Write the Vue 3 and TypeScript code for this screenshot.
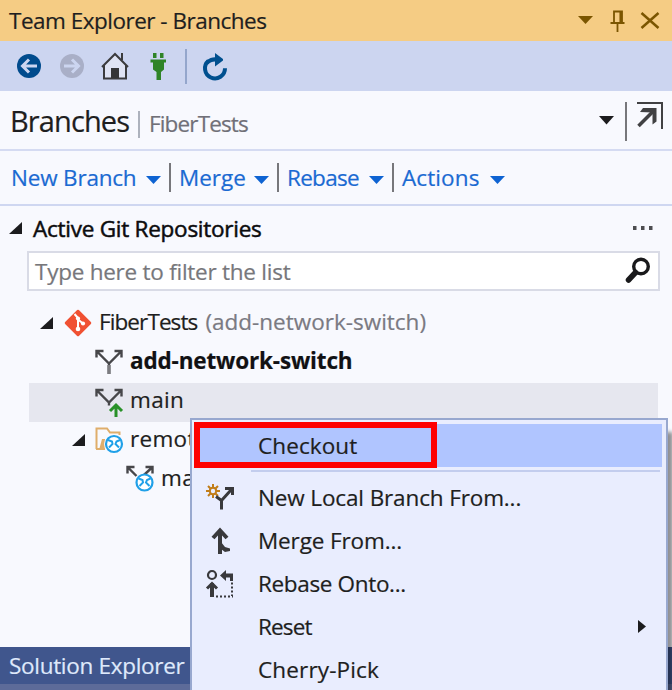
<script setup lang="ts">
interface Action { label: string; cls: string }
interface MenuItem { label: string; cls: string; icon?: string; submenu?: boolean }

const actions: Action[] = [
  { label: 'New Branch', cls: 'new' },
  { label: 'Merge', cls: 'merge' },
  { label: 'Rebase', cls: 'rebase' },
  { label: 'Actions', cls: 'actions' },
]

const menu: MenuItem[] = [
  { label: 'New Local Branch From...', cls: 'm-new', icon: 'new' },
  { label: 'Merge From...', cls: 'm-new', icon: 'merge' },
  { label: 'Rebase Onto...', cls: 'm-rebase', icon: 'rebase' },
  { label: 'Reset', cls: 'm-reset', submenu: true },
  { label: 'Cherry-Pick', cls: 'm-cherry' },
]
</script>

<template>
  <div class="window">
    <header class="titlebar">
      <span class="title">Team Explorer - Branches</span>
      <svg class="window-icons" width="84" height="24" viewBox="0 0 84 24">
        <path d="M1 7h15l-7.500 8z" fill="#7b5500" />
        <g fill="none" stroke="#7b5500" stroke-width="1.800">
          <path d="M37 14V2.500h8V14M33.500 14h14M40.500 14v9" />
          <path d="M43.700 3v11" stroke-width="2.500" />
          <path d="M64.500 4l17 15M81.500 4l-17 15" stroke-width="2.500" />
        </g>
      </svg>
    </header>

    <nav class="toolbar">
      <svg width="28" height="28" viewBox="0 0 28 28">
        <circle cx="14" cy="14" r="12" fill="#004b8d" />
        <path d="M22 14H8M14 7.500L7.500 14l6.500 6.500" fill="none" stroke="#ccd5f0" stroke-width="3" />
      </svg>
      <svg width="28" height="28" viewBox="0 0 28 28">
        <circle cx="14" cy="14" r="12" fill="#a9afc7" />
        <path d="M6 14h14M14 7.500l6.500 6.500-6.500 6.500" fill="none" stroke="#ccd5f0" stroke-width="3" />
      </svg>
      <svg width="28" height="28" viewBox="0 0 28 28">
        <path d="M3 14L14 3l11 11v12.500H3z" fill="#dfe3f3" />
        <path d="M1 15L14 2l13 13M3 13v13.500h22V13M21 8V1" fill="none" stroke="#3b3b3d" stroke-width="2" />
        <path d="M10 16h8v10h-8z" fill="#353537" />
      </svg>
      <svg width="28" height="28" viewBox="0 0 28 28">
        <path d="M9 1h3.500v5H9zM16 1h3.500v5H16zM6.500 7.500h15.500v3H20v7l-3 2.500v8h-4.500v-8l-3.500-2.500v-7H6.500z" fill="#2f8427" />
      </svg>
      <i class="rule"></i>
      <svg class="refresh" width="28" height="28" viewBox="0 0 28 28">
        <path d="M7.500 7.800a10 10 0 1 0 16.500 7.500" fill="none" stroke="#00508f" stroke-width="4" />
        <path d="M5 8c3-3 6-3.800 9-3.800V0l8 6v1.500l-8 6V8.500c-3 0-5 1-7 3z" fill="#00508f" />
      </svg>
    </nav>

    <section class="heading">
      <h1>Branches</h1>
      <i class="heading-rule"></i>
      <span class="project">FiberTests</span>
      <div class="heading-tools">
        <svg width="15" height="9" viewBox="0 0 15 9"><path d="M0 0h15L7.500 8.500z" fill="#1c1c1e" /></svg>
        <i class="tool-rule"></i>
        <svg class="popout" width="28" height="28" viewBox="0 0 28 28">
          <path d="M1 2h25v26" fill="none" stroke="#414143" stroke-width="2" />
          <path d="M2.500 25L17.500 10" fill="none" stroke="#414143" stroke-width="3.500" />
          <path d="M7 7h13.500v13.500l-4 3V11.500L4 11z" fill="#414143" />
        </svg>
      </div>
    </section>

    <nav class="actions-row">
      <a v-for="a in actions" :key="a.label" :class="['action', 'a-' + a.cls]">
        <span>{{ a.label }}</span>
        <svg width="15" height="8" viewBox="0 0 15 8"><path d="M0 0h15L7.500 8z" fill="#0e63d2" /></svg>
      </a>
    </nav>

    <section class="repos">
      <div class="section-title">
        <svg width="13" height="12" viewBox="0 0 13 12"><path d="M13 0v12H0z" fill="#1c1c1e" /></svg>
        <h2>Active Git Repositories</h2>
        <svg class="dots" width="22" height="4" viewBox="0 0 22 4"><path d="M1 0h3.500v4H1zM9 0h3.500v4H9zM17 0h3.500v4H17z" fill="#4d4d50" /></svg>
      </div>
      <div class="filter">
        <span>Type here to filter the list</span>
        <svg width="28" height="28" viewBox="0 0 28 28">
          <circle cx="17" cy="9.500" r="7.300" fill="none" stroke="#19191b" stroke-width="3.400" />
          <path d="M11.500 15.500L4.500 23" stroke="#19191b" stroke-width="5.500" stroke-linecap="round" />
        </svg>
      </div>

      <div class="tree">
        <div class="node depth-0">
          <svg width="13" height="12" viewBox="0 0 13 12"><path d="M13 0v12H0z" fill="#1c1c1e" /></svg>
          <svg class="git" width="28" height="28" viewBox="0 0 28 28">
            <path d="M14 2l12 12-12 12L2 14z" fill="#f05133" stroke="#f05133" stroke-width="2.500" stroke-linejoin="round" />
            <path d="M10.500 5l3.500 4v11M14 10.500l5 4" fill="none" stroke="#fff" stroke-width="2" />
            <circle cx="14" cy="9.500" r="2.100" fill="#fff" /><circle cx="19" cy="14.500" r="2.100" fill="#fff" /><circle cx="14" cy="20" r="2.300" fill="#fff" />
          </svg>
          <span class="repo">FiberTests</span><span class="current">(add-network-switch)</span>
        </div>
        <div class="node depth-1">
          <svg width="28" height="28" viewBox="0 0 28 28">
            <path d="M1.500 10.500V4h7M19.500 4h7v6.500M2 4.500l12 12 12-12M14 16v11" fill="none" stroke="#47474a" stroke-width="2.400" />
            <path d="M14 18v9" stroke="#7c7c80" stroke-width="3.500" />
          </svg>
          <b>add-network-switch</b>
        </div>
        <div class="node depth-1 selected">
          <svg width="28" height="28" viewBox="0 0 28 28">
            <path d="M1.500 10.500V4h7M19.500 4h7v6.500M2 4.500l12 12 12-12M14 15.500v4" fill="none" stroke="#47474a" stroke-width="2.400" />
            <path d="M21 31V20M15 25l6-6 6 6" fill="none" stroke="#289128" stroke-width="3" />
          </svg>
          <span class="main">main</span>
        </div>
        <div class="node depth-folder">
          <svg width="13" height="12" viewBox="0 0 13 12"><path d="M13 0v12H0z" fill="#1c1c1e" /></svg>
          <svg class="folder" width="28" height="28" viewBox="0 0 28 28">
            <path d="M1.500 23V2.500H12l3 4h9.500V9M1 23h5" fill="none" stroke="#dfae6b" stroke-width="2" />
            <path d="M4 24l3-11h3v11z" fill="#dfae6b" />
            <circle cx="19" cy="18" r="10" fill="#f7f9fe" />
            <circle cx="19" cy="18" r="8" fill="#fff" stroke="#20a0e8" stroke-width="2.200" />
            <path d="M13 14l4 1.500.5 2.500-3.500 3.500M25 14l-3.500 1.500-1 2.500 3.500 3.500" fill="none" stroke="#20a0e8" stroke-width="2" />
          </svg>
          <span class="main">remot</span>
        </div>
        <div class="node depth-2">
          <svg width="28" height="28" viewBox="0 0 28 28">
            <path d="M1.500 9.500V3h7M19.500 3h7v6.500M2 3.500l8.500 8.500M26 3.500L18 11" fill="none" stroke="#47474a" stroke-width="2.400" />
            <circle cx="18.500" cy="18.500" r="8" fill="#fff" stroke="#20a0e8" stroke-width="2.200" />
            <path d="M12.500 14.500l4 1.500.5 2.500-3.500 3.500M24.500 14.500L21 16l-1 2.500 3.500 3.500" fill="none" stroke="#20a0e8" stroke-width="2" />
          </svg>
          <span class="main">ma</span>
        </div>
      </div>
    </section>

    <footer class="bottom-tab"><span>Solution Explorer</span></footer>

    <div class="context-menu">
      <div class="item active"><span class="label m-checkout">Checkout</span></div>
      <hr />
      <div v-for="m in menu" :key="m.label" class="item">
        <span class="glyph">
          <svg v-if="m.icon === 'new'" width="28" height="28" viewBox="0 0 28 28">
            <path d="M7 0v14M0 7h14M2 2l10 10M12 2L2 12" stroke="#c17d19" stroke-width="2" />
            <circle cx="7" cy="7" r="3.200" fill="#e9edfe" stroke="#c17d19" stroke-width="2" />
            <path d="M10 12.500l5.500 4L25 6M15.500 16v9.500M19 4.500h7.500V11" fill="none" stroke="#39393c" stroke-width="3" />
          </svg>
          <svg v-else-if="m.icon === 'merge'" width="28" height="28" viewBox="0 0 28 28">
            <path d="M14 27V3M7 11l7-7.500 7 7.500" fill="none" stroke="#39393c" stroke-width="4" />
            <path d="M15 15l4 5 5 1.500v2.500l-5 1-4-3z" fill="#39393c" />
          </svg>
          <svg v-else-if="m.icon === 'rebase'" width="28" height="28" viewBox="0 0 28 28">
            <circle cx="6" cy="5" r="4" fill="none" stroke="#39393c" stroke-width="2.200" />
            <path d="M6 13v14" stroke="#39393c" stroke-width="4" />
            <path d="M1 18.500l5-5 5 5" fill="none" stroke="#39393c" stroke-width="3" />
            <path d="M14 5.500L20 0v3.500h7V11h-3V7.500h-4V11z" fill="#39393c" />
            <path d="M26 12.500v13.500M10 26.500h17" stroke="#39393c" stroke-width="2" stroke-dasharray="2 2" />
          </svg>
        </span>
        <span :class="['label', m.cls]">{{ m.label }}</span>
        <svg v-if="m.submenu" class="sub" width="8" height="13" viewBox="0 0 8 13"><path d="M0 0l8 6.500L0 13z" fill="#1c1c1e" /></svg>
      </div>
      <div class="callout"></div>
    </div>
  </div>
</template>

<style>
body { overflow: hidden; }
</style>

<style scoped>
* { box-sizing: border-box; }
svg { display: block; flex: none; overflow: visible; }
i { flex: none; }
.window {
  position: relative;
  width: 672px;
  height: 690px;
  overflow: hidden;
  display: flex;
  flex-direction: column;
  background: #f8f9fe;
  font-family: "Open Sans", "Noto Sans", sans-serif;
  font-size: 22.5px;
  color: #1e1e20;
  white-space: nowrap;
  -webkit-text-stroke: 0.2px;
}
.titlebar {
  flex: none;
  height: 41px;
  display: flex;
  align-items: center;
  justify-content: space-between;
  padding: 0 11px 0 9px;
  background: #f5cc84;
}
.title { letter-spacing: -0.5px; }
.toolbar {
  flex: none;
  height: 50px;
  display: flex;
  align-items: center;
  gap: 15px;
  padding-left: 15px;
  background: #ccd5f0;
}
.rule { width: 2px; height: 35px; margin: 0 0 0 -2px; background: #94a6cc; }
.refresh { margin: 2px 0 0 -1px; }
.heading {
  flex: none;
  height: 60px;
  display: flex;
  align-items: center;
  padding: 0 8px 0 10px;
  border-bottom: 2px solid #d5dbf2;
}
h1 { margin: 2px 0 0; font-size: 29px; font-weight: 400; letter-spacing: -0.9px; width: 128px; line-height: 60px; }
.heading-rule { width: 2px; height: 27px; margin-top: 8px; background: #adb2bd; }
.project { margin: 7px 0 0 9px; color: #707078; letter-spacing: -0.85px; }
.heading-tools { margin-left: auto; display: flex; align-items: center; gap: 11px; }
.tool-rule { width: 2px; height: 39px; margin: 2px -2px 0 0; background: #77777b; }
.popout { margin-top: -10px; }
.actions-row {
  flex: none;
  height: 55px;
  display: flex;
  align-items: center;
  border-bottom: 2px solid #cfd7f1;
  color: #1b6ad2;
}
.action { height: 29px; display: flex; align-items: center; justify-content: space-between; padding: 0 8px 0 8px; border-right: 2px solid #77777b; }
.action svg { margin-top: 5px; }
.a-new { width: 171px; padding-left: 11px; letter-spacing: -0.2px; }
.a-merge { width: 108px; }
.a-rebase { width: 115px; letter-spacing: -0.7px; }
.a-actions { width: 111px; padding: 0 0 0 8px; border: 0; letter-spacing: 0.1px; }
.repos { flex: none; height: 441px; }
.section-title { height: 45px; display: flex; align-items: center; padding: 0 18px 0 9px; }
.section-title svg { margin-top: -2px; }
h2 { margin: 0 0 0 11px; font-size: 22.5px; font-weight: 500; letter-spacing: -0.25px; color: #0c0c0e; -webkit-text-stroke: 0.5px; }
.section-title .dots { margin: -1px 0 0 auto; }
.filter {
  height: 40px;
  margin: 0 12px 0 27px;
  padding: 0 6px 0 6px;
  display: flex;
  align-items: center;
  justify-content: space-between;
  border: 2px solid #d9dbe6;
  background: #fff;
  color: #77777b;
  letter-spacing: -0.25px;
}
.tree { margin: 14px 14px 0 29px; }
.node { height: 39px; display: flex; align-items: center; padding-bottom: 6px; }
.node > svg { margin-top: 3px; }
.depth-0 { padding-left: 11px; }
.node > .git { margin: 3px 7px 0 11px; }
.repo { letter-spacing: -0.9px; }
.current { margin-left: 8px; color: #7a7a82; }
.depth-1 { padding-left: 66px; }
.node.depth-1 > svg { margin: 0 7px 0 0; }
b { font-weight: 700; letter-spacing: -0.15px; color: #111113; }
.selected { background: #e6e7ef; }
.main { letter-spacing: 0.3px; }
.depth-folder { padding-left: 43px; }
.node > .folder { margin: 2px 7px 0 10px; }
.depth-2 { padding-left: 97px; }
.node.depth-2 > svg { margin: 1px 7px 0 0; }
.bottom-tab {
  flex: none;
  height: 43px;
  padding-left: 9px;
  border-bottom: 6px solid #5d6b99;
  background: #40568d;
  color: #dfe9fb;
  line-height: 38px;
  letter-spacing: -0.3px;
}
.context-menu {
  position: absolute;
  left: 190px;
  top: 418px;
  width: 478px;
  height: 290px;
  padding: 4px 3px;
  border: 2px solid #98a8cf;
  background: #e9edfe;
  box-shadow: 5px 14px 4px rgba(0, 0, 0, 0.42);
}
.item { height: 43px; display: flex; align-items: center; padding-left: 11px; }
.active { margin-right: 1px; padding-left: 63px; background: #b0c5ff; }
.glyph { width: 52px; height: 28px; flex: none; }
hr { height: 2px; margin: 3px 3px 4px 56px; border: 0; background: #c3cdee; }
.sub { margin-left: auto; margin-right: 17px; }
.m-checkout { letter-spacing: 0.1px; }
.m-new { letter-spacing: -0.13px; }
.m-rebase { letter-spacing: -0.34px; }
.m-reset { letter-spacing: -0.85px; }
.m-cherry { letter-spacing: 0.15px; }
.callout {
  position: absolute;
  left: 2px;
  top: 2px;
  width: 243px;
  height: 46px;
  border: 6px solid #fe0000;
}
</style>
